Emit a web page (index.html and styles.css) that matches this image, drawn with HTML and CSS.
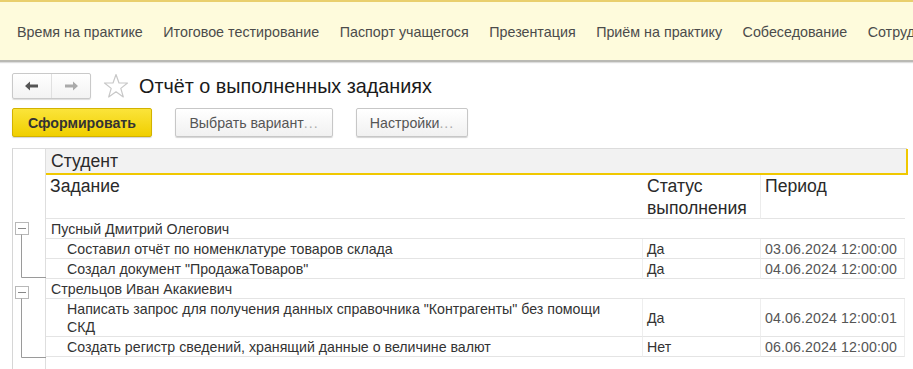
FILE: index.html
```html
<!DOCTYPE html>
<html lang="ru">
<head>
<meta charset="utf-8">
<link rel="stylesheet" href="styles.css">
</head>
<body>
<div class="topbar">
  <span class="nav-item">Время на практике</span>
  <span class="nav-item">Итоговое тестирование</span>
  <span class="nav-item">Паспорт учащегося</span>
  <span class="nav-item">Презентация</span>
  <span class="nav-item">Приём на практику</span>
  <span class="nav-item">Собеседование</span>
  <span class="nav-item">Сотрудники</span>
</div>
<div class="content">
  <div class="titlerow">
    <div class="navbtns">
      <span class="navbtn"><svg width="16" height="12" viewBox="0 0 16 12"><path d="M1 6 L6 1.5 L6 4.5 L14 4.5 L14 7.5 L6 7.5 L6 10.5 Z" fill="#555"/></svg></span>
      <span class="navbtn"><svg width="16" height="12" viewBox="0 0 16 12"><path d="M15 6 L10 1.5 L10 4.5 L2 4.5 L2 7.5 L10 7.5 L10 10.5 Z" fill="#aaa"/></svg></span>
    </div>
    <svg class="star" width="26" height="26" viewBox="0 0 26 26"><path d="M13 1.5 L16 10 L24.5 10 L17.8 15.4 L20.3 24 L13 18.8 L5.7 24 L8.2 15.4 L1.5 10 L10 10 Z" fill="#fff" stroke="#c8c8c8" stroke-width="1.2" stroke-linejoin="round"/></svg>
    <h1 class="title">Отчёт о выполненных заданиях</h1>
  </div>
  <div class="toolbar">
    <button class="btn btn-primary">Сформировать</button>
    <button class="btn btn-variant">Выбрать вариант<span class="dots">...</span></button>
    <button class="btn btn-settings">Настройки<span class="dots">...</span></button>
  </div>
  <div class="report">
    <div class="row head1">
      <div class="tree"></div>
      <div class="cell span3">Студент</div>
    </div>
    <div class="row head2">
      <div class="tree"></div>
      <div class="cell c1">Задание</div>
      <div class="cell c2">Статус<br>выполнения</div>
      <div class="cell c3">Период</div>
    </div>
    <div class="group">
      <svg class="treeline" width="34" height="62" viewBox="0 0 34 62"><rect x="2.5" y="3.5" width="13" height="12" fill="#fff" stroke="#b8b8b8"/><path d="M5 9.5 H13" stroke="#888"/><path d="M8.5 15.5 V58.5 H33" stroke="#9a9a9a" fill="none"/></svg>
      <div class="row grow">
        <div class="tree"></div>
        <div class="cell span3 gname">Пусный Дмитрий Олегович</div>
      </div>
      <div class="row drow">
        <div class="tree"></div>
        <div class="cell c1 item">Составил отчёт по номенклатуре товаров склада</div>
        <div class="cell c2">Да</div>
        <div class="cell c3 date">03.06.2024 12:00:00</div>
      </div>
      <div class="row drow">
        <div class="tree"></div>
        <div class="cell c1 item">Создал документ "ПродажаТоваров"</div>
        <div class="cell c2">Да</div>
        <div class="cell c3 date">04.06.2024 12:00:00</div>
      </div>
    </div>
    <div class="group">
      <svg class="treeline" width="34" height="80" viewBox="0 0 34 80"><rect x="2.5" y="7.5" width="13" height="12" fill="#fff" stroke="#b8b8b8"/><path d="M5 13.5 H13" stroke="#888"/><path d="M8.5 19.5 V78.5 H33" stroke="#9a9a9a" fill="none"/></svg>
      <div class="row grow">
        <div class="tree"></div>
        <div class="cell span3 gname">Стрельцов Иван Акакиевич</div>
      </div>
      <div class="row drow">
        <div class="tree"></div>
        <div class="cell c1 item">Написать запрос для получения данных справочника "Контрагенты" без помощи СКД</div>
        <div class="cell c2 mid">Да</div>
        <div class="cell c3 date mid">04.06.2024 12:00:01</div>
      </div>
      <div class="row drow">
        <div class="tree"></div>
        <div class="cell c1 item">Создать регистр сведений, хранящий данные о величине валют</div>
        <div class="cell c2">Нет</div>
        <div class="cell c3 date">06.06.2024 12:00:00</div>
      </div>
    </div>
    <div class="row filler">
      <div class="tree"></div>
    </div>
  </div>
</div>
</body>
</html>
```
FILE: styles.css
```css
* { box-sizing: border-box; }
html, body { margin: 0; padding: 0; background: #fff; overflow: hidden; }
body {
  width: 913px;
  height: 369px;
  font-family: "Liberation Sans", Arial, sans-serif;
  color: #333;
}
.topbar {
  height: 62px;
  background: #fefbdc;
  border-top: 2px solid #e9cf6e;
  border-bottom: 2px solid #b9b9b4;
  display: flex;
  align-items: center;
  padding-left: 17px;
  padding-top: 1px;
  gap: 20.5px;
  white-space: nowrap;
  overflow: hidden;
  box-shadow: 0 1px 1px #ddd;
}
.nav-item {
  font-size: 14.3px;
  color: #4b4b4b;
  flex: none;
}
.content { padding-left: 12px; }
.titlerow {
  display: flex;
  align-items: center;
  height: 34px;
  margin-top: 7px;
}
.navbtns {
  display: flex;
  width: 79px;
  height: 26px;
  border: 1px solid #c9c9c9;
  border-radius: 2px;
  background: linear-gradient(#fff, #f3f3f3);
  box-shadow: 0 1px 1px #ddd;
}
.navbtn {
  flex: 1;
  display: flex;
  align-items: center;
  justify-content: center;
}
.navbtn + .navbtn { border-left: 1px solid #e0e0e0; }
.star { margin-left: 12px; }
.title {
  margin: 0 0 0 10px;
  font-size: 19.8px;
  font-weight: normal;
  color: #1a1a1a;
}
.toolbar {
  display: flex;
  gap: 23px;
  margin-top: 5px;
  height: 29px;
}
.btn {
  font-family: "Liberation Sans", Arial, sans-serif;
  font-size: 14.2px;
  height: 29px;
  border: 1px solid #c7c7c7;
  border-radius: 2px;
  background: linear-gradient(#fff, #f1f1f1);
  color: #555;
  padding: 0;
  box-shadow: 0 1px 1px #d4d4d4;
}
.dots { color: #aaa; letter-spacing: 1px; }
.btn-primary {
  width: 140px;
  background: linear-gradient(#fbe43a, #f0cf00);
  border-color: #d2b200;
  font-weight: bold;
  color: #333;
}
.btn-variant { width: 158px; }
.btn-settings { width: 112px; }
.report {
  margin-top: 11px;
  width: 895px;
  border-left: 1px solid #d6d6d6;
  border-top: 1px solid #dcdcdc;
}
.row {
  display: grid;
  grid-template-columns: 33px 597px 118px 144px;
}
.tree { border-right: 1px solid #dedede; }
.cell { font-size: 14.2px; color: #333; }
.span3 { grid-column: 2 / 5; }
.head1 .cell {
  background: #f2f2f2;
  height: 26px;
  font-size: 17.6px;
  padding: 2px 0 0 5px;
  border-bottom: 2px solid #f0c800;
  border-right: 2px solid #f0c800;
  margin-right: -3px;
  color: #2a2a2a;
}
.head2 .cell {
  font-size: 17.6px;
  line-height: 22px;
  height: 44px;
  padding: 0 0 0 4px;
  color: #2a2a2a;
  border-bottom: 1px solid #e4e4e4;
}
.head2 .c2 { border-right: 1px solid #ececec; }
.group { position: relative; }
.treeline { position: absolute; left: 0; top: 0; }
.grow .cell {
  height: 20px;
  line-height: 17px;
  padding: 2px 0 0 5px;
  border-bottom: 1px solid #e4e4e4;
}
.drow .cell {
  padding: 1px 0 0 4px;
  line-height: 18px;
  min-height: 20px;
  border-bottom: 1px solid #e4e4e4;
}
.drow .item { padding-left: 21px; padding-right: 28px; }
.drow .c1, .drow .c2, .drow .c3 { border-right: 1px solid #eeeeee; }
.drow .mid { display: flex; align-items: center; padding-top: 0; }
.date { color: #555; letter-spacing: 0.1px; }
.filler { height: 13px; }
```
